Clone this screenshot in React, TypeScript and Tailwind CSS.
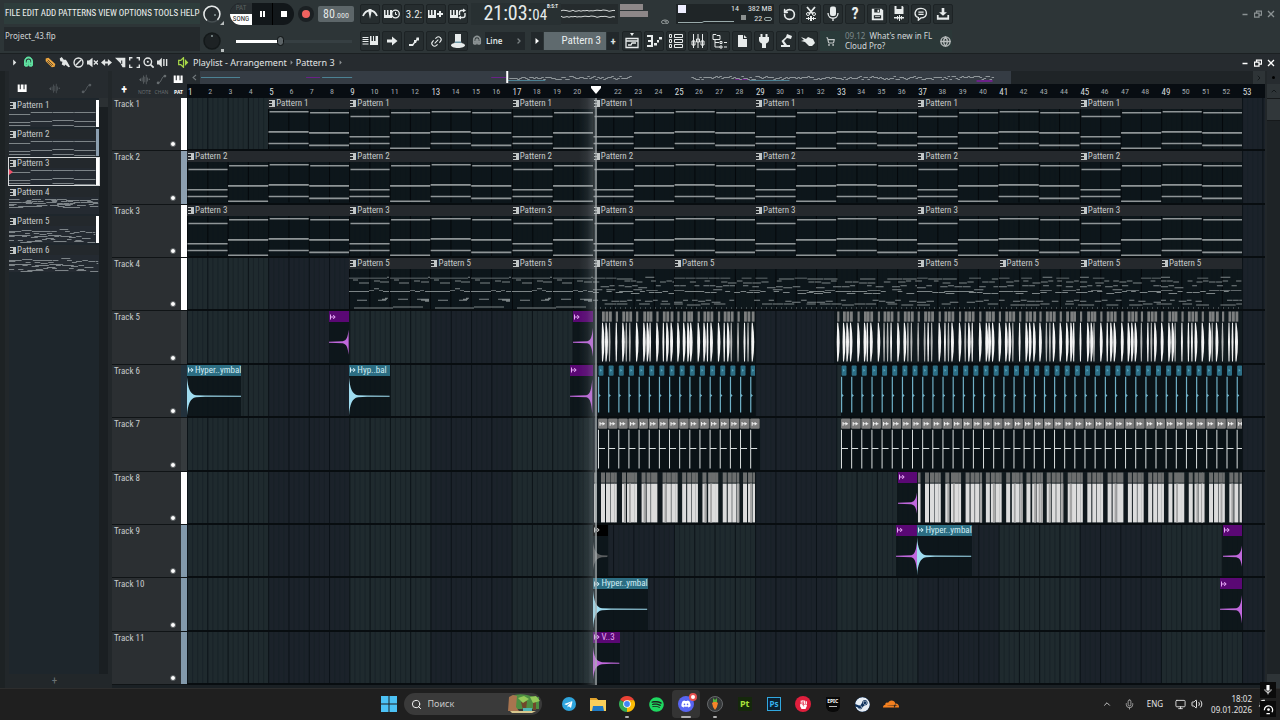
import type { ReactNode } from "react";
import {
  ChevronRight, ChevronUp, Globe, Link2, Magnet, Mic, Monitor, RotateCw, Search, ShoppingCart, Volume2,
} from "lucide-react";
import { FaDiscord, FaSpotify, FaSteam, FaTelegramPlane, FaFistRaised } from "react-icons/fa";
import { SiCloudflare } from "react-icons/si";

// One bar is drawn BAR units wide, VISIBLE bars fit in the timeline.
const BAR = 20.28;
const VISIBLE = 53.13;
const BODY = 42;

const pct = (bars: number) => `${(bars / VISIBLE) * 100}%`;
const rnd = (i: number) => {
  const v = Math.sin(i * 12.9898) * 43758.5453;
  return v - Math.floor(v);
};
const box = (x: number, y: number, w: number, h: number) => `M${x.toFixed(2)} ${y}h${w.toFixed(2)}v${h}h${(-w).toFixed(2)}z`;

const CHORDS = [
  [7, 28, 35],
  [3, 24, 40],
  [2, 23, 35],
  [3, 24, 37],
];

function chordPath(len: number, offset: number) {
  let d = "";
  for (let i = 0; i < len / 2; i++) {
    CHORDS[(i + offset) % 4].forEach((y, n) => {
      const inset = n === 0 ? 1.5 : 0.5;
      d += box(i * BAR * 2 + inset, y, BAR * 2 - inset, 1.7);
    });
  }
  return d;
}

const MELODY = [
  [0, 9, 38], [38, 8, 2], [41, 9, 38], [79, 8, 2],
  [4, 11, 5], [10, 14, 10], [25, 12, 6], [31, 13, 9], [45, 11, 5], [50, 14, 10], [65, 12, 6], [72, 13, 8],
  [0, 23, 20], [20, 22, 5], [25, 20, 5], [30, 22, 4], [34, 23, 6], [41, 23, 20], [61, 22, 5], [66, 23, 5], [71, 22, 4], [76, 23, 5],
  [8, 32, 10], [29, 32, 8], [33, 31, 5], [36, 30, 3], [49, 31, 10], [68, 31, 12], [72, 32, 8], [76, 33, 4],
  [5, 40, 39], [44, 39, 30],
];

function melodyPath(len: number) {
  let d = "";
  for (let b = 0; b < len; b += 4) for (const [x, y, w] of MELODY) d += box(b * BAR + x, y, w, 1);
  return d;
}

function densePath(len: number, seed: number, height = 38) {
  let d = "";
  const end = len * BAR;
  const rows = [0.22, 0.32, 0.44, 0.56, 0.61, 0.84, 0.94];
  for (let r = 0; r < rows.length; r++) {
    let x = 0;
    for (let i = 0; x < end - 1; i++) {
      const k = rnd(((i * 7 + r * 31 + seed) % 90) + 1);
      const w = Math.min(end - x, r % 3 === 0 ? 6 + k * 10 : 3 + k * 6);
      if (k > 0.25) d += box(x, Math.round(rows[r] * height + k * 3 - 1), w, 1);
      x += w + (k < 0.4 ? 4 : 0.5);
    }
  }
  if (height > 20) for (let x = 2; x < end; x += 5) d += box(x, height + 2, 1, 1);
  return d;
}

type ClipProps = { start: number; len: number; name?: string; head: string; color: string; d: string; pattern?: boolean };

function ArrowMark() {
  return (
    <svg viewBox="0 0 6 6" className="h-[6px] w-[6px] shrink-0" fill="none" stroke="currentColor">
      <path d="M.5 .5v5M1 3h4M3.2 1l2 2-2 2" />
    </svg>
  );
}

function PatternMark() {
  return (
    <svg viewBox="0 0 6 7" className="h-[7px] w-[6px] shrink-0" aria-hidden="true">
      <path d="M0 0h6v7H0V6h3V4H0V3h3V1H0z" fill="#c3c7c7" />
    </svg>
  );
}

function Clip({ start, len, name, head, color, d, pattern }: ClipProps) {
  return (
    <div className="absolute inset-y-0 flex flex-col overflow-hidden bg-[#0c1519]/90" style={{ left: pct(start - 1), width: pct(len) }}>
      <div className={`flex h-[11px] shrink-0 items-center gap-px pl-px text-[9px] leading-[11px] whitespace-nowrap ${head}`}>
        {pattern ? <PatternMark /> : <ArrowMark />}
        <span>{name}</span>
      </div>
      <svg className="min-h-0 w-full flex-1" viewBox={`0 0 ${len * BAR} ${BODY}`} preserveAspectRatio="none">
        {pattern &&
          Array.from({ length: Math.ceil(len) }, (_, i) => (
            <path key={i} d={box(i * BAR, 0, 1, BODY)} fill="#05090c" />
          ))}
        <path d={d} fill={color} />
      </svg>
    </div>
  );
}

const PATTERN_HEAD = "bg-[#25292d] text-[#c5c9c9]";
const CYMBAL_HEAD = "bg-[#2c6d82] text-[#d3edf5]";
const FX_HEAD = "bg-[#5a0874] text-[#e6a8f5]";

const cymbalWave = (len: number, a = 20) => {
  const w = len * BAR;
  return `M0 ${21 - a}C1 ${21 - a * 0.4} 3 19 9 20L18 20.400 ${w} 20.500V21.500L18 21.600 9 22C3 23 1 ${21 + a * 0.4} 0 ${21 + a}Z`;
};
const fxWave = (len: number, a = 18) => {
  const w = len * BAR;
  return `M${w} ${21 - a}C${w - 1} ${21 - a * 0.4} ${w - 2} 19 ${w - 6} 20L0 20.500V21.500L${w - 6} 22C${w - 2} 23 ${w - 1} ${21 + a * 0.4} ${w} ${21 + a}Z`;
};

const Cymbal = ({ start, len, name }: { start: number; len: number; name: string }) => (
  <Clip start={start} len={len} name={name} head={CYMBAL_HEAD} color="#9fdcf0" d={cymbalWave(len)} />
);
const Fx = ({ start, len, a }: { start: number; len: number; a?: number }) => (
  <Clip start={start} len={len} head={FX_HEAD} color="#c068dc" d={fxWave(len, a)} />
);

function Chords({ name, starts }: { name: string; starts: number[][] }) {
  return (
    <>
      {starts.map(([s, len, off]) => (
        <Clip key={s} start={s} len={len} name={name} pattern head={PATTERN_HEAD} color="#8f9597" d={chordPath(len, off)} />
      ))}
    </>
  );
}

// Run is a stretch of short one-shot clips drawn as one picture.
function Run({ start, end, kind }: { start: number; end: number; kind: "hat" | "tick" | "snare" | "kick" }) {
  const bars = end - start;
  const w = bars * BAR;
  const marks: ReactNode[] = [];
  if (kind === "tick" || kind === "snare") {
    for (let i = 0; i < bars * 2; i++) {
      const x = (i * BAR) / 2;
      if (kind === "tick") {
        marks.push(
          <g key={i}>
            <rect x={x + 0.5} y="0.5" width="5" height="10.500" rx="1" fill="#2d6f86" />
            <path d={`M${x + 2} 4l2 1.500-2 1.500z`} fill="#5aa6bd" />
            <path d={`M${x} 12h1.200v18l1.500 1.500L${x + 1.2} 33v16h-1.200z`} fill="#6fb0c6" />
          </g>,
        );
      } else {
        marks.push(
          <g key={i}>
            <rect x={x} y="0.500" width="9.500" height="10.500" rx="1" fill="#7c7c7c" />
            <path d={`M${x + 2} 4v4M${x + 2} 6h5M${x + 4.5} 4.500l1.500 1.500-1.500 1.500`} stroke="#eee" fill="none" />
            <path d={`M${x} 12h1v19h6v1h-6v20h-1z`} fill="#dadfdf" />
          </g>,
        );
      }
    }
  } else {
    const hits = kind === "hat" ? [2.5, 9, 12.5, 16] : [0, 7, 12, 16.5];
    for (let b = 0; b < bars; b++) {
      hits.forEach((h, n) => {
        const r = rnd(b * 4 + n + start);
        const x = b * BAR + h + (r > 0.7 ? 0.7 : 0);
        if (x > w - 2) return;
        if (kind === "hat") {
          if (start === 21 && b === 0 && n === 0) return;
          const t = r > 0.4 ? 3 : 1;
          marks.push(
            <g key={`${b}-${n}`}>
              <rect x={x} y="0.500" width={n ? 2.8 : 2.2} height="10.500" fill="#7d7f7f" />
              <path d={`M${x} 12q-1 20 0 40h1q${t} -20 0 -40z`} fill={r > 0.2 ? "#f4f4f4" : "#b5b7b7"} />
            </g>,
          );
        } else {
          const t = n === 0 ? 2.5 : 4;
          marks.push(
            <g key={`${b}-${n}`}>
              <rect x={x} y="0.500" width={t} height="10.500" fill="#6c6e6e" />
              <rect x={x} y="12" width={t} height="40" fill="#dcdcdc" />
              {r > 0.6 && <rect x={x + t - 2} y="12" width="2" height="40" fill="#a5a5a5" />}
            </g>,
          );
        }
      });
    }
  }
  const solid = kind === "snare" || kind === "tick";
  return (
    <svg
      className={`absolute inset-y-0 h-full ${solid ? "bg-[#0a1216]" : "bg-[#0a1216]/60"}`}
      style={{ left: pct(start - 1), width: pct(bars) }}
      viewBox={`0 0 ${w} 53`}
      preserveAspectRatio="none"
    >
      {marks}
    </svg>
  );
}

const FULL = [[1, 8, 0], [9, 8, 0], [17, 4, 0], [21, 8, 0], [29, 8, 0], [37, 8, 0]];

const TRACKS: { strip: string; clips: ReactNode }[] = [
  { strip: "bg-white", clips: <Chords name="Pattern 1" starts={[[5, 4, 2], ...FULL.slice(1), [45, 8, 0]]} /> },
  { strip: "bg-[#8c9fb0]", clips: <Chords name="Pattern 2" starts={[...FULL, [45, 8, 0]]} /> },
  { strip: "bg-white", clips: <Chords name="Pattern 3" starts={[...FULL, [45, 8, 0]]} /> },
  {
    strip: "bg-white",
    clips: [[9, 4], [13, 4], [17, 4], [21, 4], [25, 12], [37, 4], [41, 4], [45, 4], [49, 4]].map(([s, len]) => (
      <Clip
        key={s}
        start={s}
        len={len}
        name="Pattern 5"
        pattern
        head={PATTERN_HEAD}
        color="#7c8486"
        d={s < 21 ? melodyPath(len) : densePath(len, s)}
      />
    )),
  },
  {
    strip: "bg-[#363b3e]",
    clips: (
      <>
        <Fx start={8.02} len={0.97} a={13} />
        <Fx start={20.02} len={1} />
        <Run start={21} end={29} kind="hat" />
        <Run start={32.9} end={53} kind="hat" />
      </>
    ),
  },
  {
    strip: "bg-[#22313c]",
    clips: (
      <>
        <Cymbal start={1} len={2.67} name="Hyper..ymbal" />
        <Cymbal start={9} len={2} name="Hyp..bal" />
        <Fx start={19.9} len={1.1} />
        <Run start={21.24} end={29} kind="tick" />
        <Run start={33.24} end={53} kind="tick" />
      </>
    ),
  },
  {
    strip: "bg-[#363b3e]",
    clips: (
      <>
        <Run start={21.24} end={29.24} kind="snare" />
        <Run start={33.24} end={53} kind="snare" />
      </>
    ),
  },
  {
    strip: "bg-white",
    clips: (
      <>
        <Run start={21.05} end={29} kind="kick" />
        <Fx start={36.05} len={0.95} a={13} />
        <Run start={37.05} end={53} kind="kick" />
      </>
    ),
  },
  {
    strip: "bg-[#8299ab]",
    clips: (
      <>
        <Clip start={21.03} len={0.7} head="bg-black text-[#ccc]" color="#5a5d5f" d={cymbalWave(0.7, 15)} />
        <Fx start={35.95} len={1.05} />
        <Cymbal start={37} len={2.67} name="Hyper..ymbal" />
        <Fx start={52.05} len={0.95} a={13} />
      </>
    ),
  },
  {
    strip: "bg-[#8299ab]",
    clips: (
      <>
        <Cymbal start={21.03} len={2.67} name="Hyper..ymbal" />
        <Fx start={51.9} len={1.1} />
      </>
    ),
  },
  {
    strip: "bg-[#8299ab]",
    clips: <Clip start={21.03} len={1.3} name="V..3" head={FX_HEAD} color="#c068dc" d={cymbalWave(1.3, 17)} />,
  },
];

function GridLines() {
  const w = VISIBLE * BAR;
  let bars = "";
  let beats = "";
  let shade = "";
  for (let b = 0; b <= VISIBLE; b++) {
    bars += box(b * BAR, 0, 1, 10);
    for (let q = 1; q < 4; q++) beats += box((b + q / 4) * BAR, 0, 1, 10);
    if (b % 8 === 4) shade += box(b * BAR, 0, BAR * 4, 10);
  }
  return (
    <svg className="absolute inset-0 h-full w-full" viewBox={`0 0 ${w} 10`} preserveAspectRatio="none">
      <path d={shade} fill="#1b222a" />
      <path d={beats} fill="#172026" opacity=".75" />
      <path d={bars} fill="#0c1318" />
    </svg>
  );
}

// G is a filled 16x16 glyph.
function G({ d, children, className = "h-4 w-4" }: { d?: string; children?: ReactNode; className?: string }) {
  return (
    <svg viewBox="0 0 16 16" className={className} fill="currentColor">
      {d && <path d={d} />}
      {children}
    </svg>
  );
}

const S = ({ d, w = 1.4 }: { d: string; w?: number }) => <path d={d} fill="none" stroke="currentColor" strokeWidth={w} />;

const KEYS = "M1 2h3v7h1.500V2h4v7H11V2h3v11H1z";
const WAVE = "M0 7.500h2V6h1v4H2zM4 5h1v6H4zM6 2h1v12H6zM8 4h1v8H8zM10 1h1v14h-1zM12 5h1v6h-1zM14 7h2v1.500h-2z";
const SMALL_KEYS = "M0 4h1.500v5H3V4h1.500v5H6V4h2v8H0z";

function Tool({ label, children }: { label: string; children: ReactNode }) {
  return (
    <button
      aria-label={label}
      className="flex h-5 w-5 shrink-0 items-center justify-center rounded-xs border border-[#1d2325] bg-[#262d2f] text-[#e8ecec]"
    >
      {children}
    </button>
  );
}

const ROW1_LEFT: [string, ReactNode][] = [
  ["Metronome", <G><S d="M1 10C3 5 6 4.500 8 4.500s5 .5 7 5.500" w={1.8} /><path d="M6.500 3h3v3l-1.500 7-1.500-7z" /></G>],
  ["Wait for input", <G d={SMALL_KEYS}><circle cx="11.500" cy="8" r="3.800" fill="none" stroke="currentColor" strokeWidth="1.300" /><S d="M11.500 6v2.500H13" w={1} /></G>],
  ["Countdown", <span className="text-[11px] leading-none">3.2:</span>],
  ["Step edit", <G d={SMALL_KEYS}><path d="M11 5h2v2h2v2h-2v2h-2V9H9V7h2z" /></G>],
  ["Loop record", <G d={SMALL_KEYS}><S d="M9.500 9V6.500a2 2 0 0 1 2-2H14M15 7v2.500a2 2 0 0 1-2 2h-2.500" /><path d="M13 2.500l3 2-3 2zM11 13.500l-3-2 3-2z" /></G>],
];

const ROW2_LEFT: [string, ReactNode][] = [
  ["Typing keyboard", <G><S d="M.5 4.500h6M.5 6.500h6M.5 8.500h6M.5 11h6" w={1} /><path d="M8 3h1.500v5H11V3h1v5h1.500V3H16v9H8z" /></G>],
  ["Follow playback", <G d="M3 6.500h5V3.500L13.500 8 8 12.500V9.500H3z" />],
  ["Slide", <G d="M3 11h3.500L8 9V7h2l.5-2.500h2.500v3H11L10 10H9l-2 3H3z" />],
  ["Link", <Link2 className="h-[13px] w-[13px] -rotate-45" />],
  ["Performance mode", <G d="M5 1h6v5c0 2 0 3 .5 4C14 10.500 15 11.500 15 12.500S12 15 8 15s-7-1.500-7-2.500S2 10.500 4.500 10C5 9 5 8 5 6z"><path d="M5 8.500h6v1.500H5z" fill="#6b98a8" /></G>],
];

const ROW1_RIGHT: [string, ReactNode][] = [
  ["Undo", <RotateCw className="h-[13px] w-[13px] -scale-x-100" strokeWidth={3} />],
  ["Cut", <G><S d="M4 1l6 7M12 1L6 8" w={1.8} /><circle cx="5" cy="8" r="1.500" fill="none" stroke="currentColor" /><circle cx="11" cy="8" r="1.500" fill="none" stroke="currentColor" /><path d="M3 12h2v-1h1v1h1v-2h2v2h1v-1h1v1h2v1h-2v1h-1v-1H9v2H7v-2H6v1H5v-1H3z" /></G>],
  ["Record audio", <G d="M5 2.500a2 2 0 0 1 2-2h2a2 2 0 0 1 2 2V8a2 2 0 0 1-2 2H7a2 2 0 0 1-2-2z"><S d="M3 7c0 7 10 7 10 0M8 12v3" w={1.3} /></G>],
  ["Help", <span className="text-[16px] leading-none font-bold">?</span>],
  ["Save", <G className="h-[13px] w-[13px]" d="M1 1h12l2 2v12H1z"><path d="M4 1h7v4.500H4zM3.500 9h9v4h-9z" fill="#262d2f" /><path d="M8 2h2v3H8zM5 10h6v1H5z" /></G>],
  ["Save new version", <G d="M3.500 0h8l1 1v7h-9z"><path d="M5.500 0h5v3h-5z" fill="#262d2f" /><path d="M3 11h3v-1h1v1h1v-2h1v2h1v-1h1v1h2v1.500h-2v1h-1v-1H9V15H8v-2.500H7v1H6v-1H3z" /></G>],
  ["Comments", <G className="h-[14px] w-[14px]"><S d="M8 1.500c8 0 8.500 11 0 11L5 15v-3C-1 10 .5 1.500 8 1.500zM5 5.800h6M5 8.500h6" w={1.5} /></G>],
  ["Export", <G className="h-[14px] w-[14px]" d="M6.500 1h3v5h3L8 10 3.500 6h3zM1 9h2v3h10V9h2v5.500H1z" />],
];

const ROW2_RIGHT: [string, ReactNode][] = [
  ["Playlist", <G><S d="M2 5.500h12v9H2zM2 8h12M4 12h3l1-2h4" w={1.3} /><path d="M6 0h4L8 3z" /></G>],
  ["Piano roll", <G d="M1 2h6v12H1v-2h4V9H2V7h3V4H1zM8 10h3v2.500H8zM11 7h2v2.500h-2zM13 4h3v2.500h-3z" />],
  ["Channel rack", <G><S d="M1.500 1.500h2v3h-2zM6.500 1.500h8v3h-8zM1.500 6.500h2v3h-2zM6.500 6.500h8v3h-8zM1.500 11.500h2v3h-2zM6.500 11.500h8v3h-8z" w={1} /></G>],
  ["Mixer", <G><S d="M3.500 1v14M8 1v14M12.500 1v14M2 8h3v4H2zM6.500 6h3v3h-3zM11 8h3v4h-3z" w={1} /></G>],
  ["Browser", <G><S d="M1 1.500h3l1 1h3v4H1zM3 7v7h5M3 9.500h4M8 8.500h2v2H8zM8 13h2v2H8zM12 9.500h3M12 14h3" w={1} /></G>],
  ["New project", <G d="M4 2h6l3 3v9H4z"><path d="M9 1.500h1V5h4v1H9z" fill="#262d2f" /></G>],
  ["Plugin picker", <G d="M4.500 1h2v3h3V1h2v3h1.500v3c0 2-1.500 3-3 3.500V15H6v-4.500C4.500 10 3 9 3 7V4h1.500z" />],
  ["Tempo tapper", <G d="M9 1l5 2-1 3-4-1L6 8l3 4h3v2H3v-2h3L3.500 8 8 4z" />],
  ["Touch", <G d="M1 4l5 2 2-2 5 2 2 4-3 3-3 0-4-4-4-1 3-1z" />],
];

function Monitors() {
  const wave = (y: number) => Array.from({ length: 28 }, (_, i) => `${i ? "L" : "M"}${i * 2} ${(y + rnd(i + y) * 1.3).toFixed(1)}`).join("");
  return (
    <svg viewBox="0 0 114 20" className="h-5 w-[114px] shrink-0" aria-hidden="true">
      <rect width="57" height="20" fill="#252b2d" />
      <path d={wave(6) + wave(12)} stroke="#d5d9d9" fill="none" />
      <path d="M59 0h23v6H59zM59 7h28v6H59z" fill="#8d8788" />
      <ellipse cx="104" cy="18" rx="3.500" ry="2" fill="none" stroke="#9ca3a3" />
      <path d="M104 17v1h2" stroke="#9ca3a3" fill="none" />
    </svg>
  );
}

const icon = "h-[11px] w-[11px]";
const TITLE_TOOLS: [string, ReactNode][] = [
  ["Draw", <G className={`${icon} text-[#f0a840]`}><path d="M1 2l4-1 10 9-1 4-4 1L1 6z" /><path d="M4 4l8 8M3 6l7 7" stroke="#262b2f" /></G>],
  ["Paint", <G className={icon} d="M1 2l3-2 3 4 3 0 2 3 4 7-2 1-5-4-1 2-4-2 1-4-3-1z" />],
  ["Delete", <G className={icon}><circle cx="8" cy="8" r="6.500" fill="none" stroke="currentColor" strokeWidth="2" /><S d="M12 4l-8 8" w={2} /></G>],
  ["Mute", <G className={icon} d="M0 5h3l5-4v14l-5-4H0z"><S d="M10 5l6 6M16 5l-6 6" w={2} /></G>],
  ["Slip", <G className={icon} d="M0 8l6-5v3.500h4V3l6 5-6 5V9.500H6V13z" />],
  ["Slice", <G className={icon} d="M0 1h15v14h-4l-3-6z"><path d="M9 5h1.500v5H9z" fill="#262b2f" /></G>],
  ["Select", <G className={icon}><S d="M1 5V1h4M11 1h4v4M15 11v4h-4M5 15H1v-4" w={2} /></G>],
  ["Zoom", <G className={icon}><circle cx="7" cy="7" r="5.500" fill="none" stroke="currentColor" strokeWidth="2" /><circle cx="7" cy="7" r="1.500" /><S d="M11 11l4.500 4.500" w={2.5} /></G>],
  ["Playback", <G className={icon} d="M0 5h3l4-4v14l-4-4H0zM9 3h2v10H9zM13 3h2v10h-2z" />],
];

function WindowButtons({ tone }: { tone: string }) {
  return (
    <div className={`flex items-center gap-[3px] ${tone}`}>
      <button aria-label="Minimize" className="flex h-3 w-[10px] items-center justify-center"><G className="h-2 w-2"><S d="M3 9h10" w={3} /></G></button>
      <button aria-label="Restore" className="flex h-3 w-[10px] items-center justify-center"><G className="h-2 w-2"><S d="M1 6h9v8H1zM5 5V2h10v8h-4" w={2.5} /></G></button>
      <button aria-label="Close" className="flex h-3 w-[10px] items-center justify-center"><G className="h-2 w-2"><S d="M2 2l12 12M14 2L2 14" w={2.5} /></G></button>
    </div>
  );
}

function Knob({ dark }: { dark?: boolean }) {
  return (
    <svg viewBox="0 0 24 22" className="h-[22px] w-6 shrink-0" aria-hidden="true">
      <circle cx="12" cy="11" r="8" fill={dark ? "#1d2224" : "#262d30"} stroke={dark ? "#14191a" : "#454d50"} strokeWidth="1.500" />
      {!dark && <path d="M7 17.500a8 8 0 1 1 10.500-.6" fill="none" stroke="#e5e8e8" strokeWidth="1.500" />}
      <circle cx={dark ? 12 : 15} cy={dark ? 6 : 12} r="1" fill="#899" />
      <path d={dark ? "M21 19h3v3h-3z" : "M24 18v4h-4z"} fill="#b9bebe" />
    </svg>
  );
}

function Transport() {
  return (
    <div className="flex w-[160px] shrink-0 flex-col gap-[5px]">
      <div className="flex h-[22px] items-center">
        <Knob />
        <div className="ml-[6px] flex h-[22px] overflow-hidden rounded-full bg-[#12171a]">
          <button className="flex w-[22px] flex-col bg-[#2a3033] text-center text-[7px] leading-[11px]">
            <span className="w-full text-[#59605f]">PAT</span>
            <span className="w-full rounded-bl-lg bg-white text-[#222]">SONG</span>
          </button>
          <button aria-label="Pause" className="flex w-[21px] items-center justify-center gap-[1px] border-r border-black">
            <span className="h-[6px] w-[2px] bg-white" />
            <span className="h-[6px] w-[2px] bg-white" />
          </button>
          <button aria-label="Stop" className="flex w-[21px] items-center justify-center">
            <span className="h-[6px] w-[6px] bg-white" />
          </button>
        </div>
        <button aria-label="Record" className="ml-[4px] flex h-4 w-4 items-center justify-center rounded-full bg-[#1b2023]">
          <span className="h-2 w-2 rounded-full bg-[#f0625f]" />
        </button>
        <div className="ml-[4px] flex h-4 w-9 items-baseline justify-center rounded-xs bg-[#5d6669] text-[12px] leading-4 text-[#e2e6e6]">
          80<span className="text-[8px]">.000</span>
        </div>
      </div>
      <div className="flex h-[22px] items-center">
        <Knob dark />
        <input
          type="range"
          aria-label="Song position"
          defaultValue={38}
          className="ml-3 h-[3px] w-[116px] appearance-none bg-[linear-gradient(to_right,#fff_38%,#363f42_38%)] [&::-webkit-slider-thumb]:h-[10px] [&::-webkit-slider-thumb]:w-[7px] [&::-webkit-slider-thumb]:appearance-none [&::-webkit-slider-thumb]:rounded-full [&::-webkit-slider-thumb]:border [&::-webkit-slider-thumb]:border-[#0d1112] [&::-webkit-slider-thumb]:bg-[#5c6467]"
        />
      </div>
    </div>
  );
}

function Header() {
  return (
    <header className="flex h-[54px] shrink-0 border-b border-[#1b2022] bg-[#2d3537] pt-[3px]">
      <div className="flex w-[200px] shrink-0 flex-col gap-[3px] pl-1">
        <nav className="flex h-[21px] items-center gap-[2px] bg-[#2e3d3c] pl-px text-[9px] whitespace-nowrap text-[#eef1f0]">
          {["FILE", "EDIT", "ADD", "PATTERNS", "VIEW", "OPTIONS", "TOOLS", "HELP"].map((m) => (
            <button key={m}>{m}</button>
          ))}
        </nav>
        <div className="h-6 bg-[#24292c] pt-[3px] pl-px font-['Noto_Sans'] text-[8px] leading-3 text-[#d2d6d6]">Project_43.flp</div>
      </div>
      <Transport />
      <div className="flex min-w-0 flex-1 flex-col gap-[5px]">
        <div className="flex h-[22px] items-center">
          <div className="flex gap-[2px]">
            {ROW1_LEFT.map(([label, g]) => <Tool key={label} label={label}>{g}</Tool>)}
          </div>
          <div className="ml-[3px] flex h-[22px] w-[90px] shrink-0 items-center justify-end bg-[#283032] pr-[3px] text-[#e6ebeb]">
            <div className="text-[20px] leading-[24px]">21:03:<span className="text-[15px]">04</span></div>
            <span className="self-start text-[5px] leading-[6px] font-bold">B:S:T</span>
          </div>
          <Monitors />
          <div className="ml-px flex h-5 w-[98px] shrink-0 justify-between bg-[#1f2527] px-[2px] text-[8px] leading-[10px] text-[#e2e6e6]">
            <svg viewBox="0 0 56 20" className="h-5 w-14 shrink-0" aria-hidden="true">
              <path d="M0 1h8v8H0z" fill="#eef" />
              <path d="M0 18.500h24l2-1h30" stroke="#9aa" fill="none" />
            </svg>
            <div className="-ml-[10px] w-[10px]">14<span className="mt-px ml-[10px] block h-[5px] w-[5px] bg-[#8b9090]" /></div>
            <div className="text-right whitespace-nowrap">382 MB<br />22 <span className="inline-block h-1 w-2 rounded-full border border-[#9aa]" /></div>
          </div>
          <div className="ml-[5px] flex gap-[2px]">
            {ROW1_RIGHT.map(([label, g]) => <Tool key={label} label={label}>{g}</Tool>)}
          </div>
          <div className="mr-1 ml-auto"><WindowButtons tone="text-[#8b9293]" /></div>
        </div>
        <div className="flex h-[22px] items-center">
          <div className="flex gap-[2px]">
            {ROW2_LEFT.map(([label, g]) => <Tool key={label} label={label}>{g}</Tool>)}
          </div>
          <Magnet className="ml-[4px] h-[10px] w-[10px] -rotate-45 text-[#8b9293]" strokeWidth={4} />
          <label className="ml-[3px] flex h-[18px] w-10 items-center bg-[#22282b] text-[#dfe3e3]">
            <select aria-label="Snap" className="w-7 appearance-none pl-px font-['Noto_Sans'] text-[8px] font-semibold">
              <option>Line</option>
            </select>
            <ChevronRight className="ml-[2px] h-2 w-2 text-[#7b8284]" strokeWidth={4} />
          </label>
          <button aria-label="Pattern menu" className="ml-[6px] flex h-[18px] w-3 items-center justify-center bg-[#22282b] text-white"><G className="h-2 w-2" d="M5 2l7 6-7 6z" /></button>
          <button className="ml-px h-[18px] w-[62px] bg-[#5f6a6e] pr-[5px] text-right text-[11px] text-[#eaeeee]">Pattern 3</button>
          <button aria-label="Add pattern" className="ml-px h-[18px] w-3 bg-[#22282b] text-[11px] leading-none font-bold text-[#dde2e2]">+</button>
          <div className="ml-[3px] flex gap-[2px]">
            {ROW2_RIGHT.map(([label, g]) => <Tool key={label} label={label}>{g}</Tool>)}
            <button aria-label="Shop" className="flex h-5 w-5 items-center justify-center bg-[#2a3b3a] text-[#c5caca]"><ShoppingCart className="h-[9px] w-[9px]" strokeWidth={3} /></button>
          </div>
          <a href="#news" className="flex h-[22px] w-[112px] items-center justify-between bg-[#2b3838] pl-[5px] font-['Noto_Sans'] text-[8px] leading-[10px] text-[#d3d8d8]">
            <span><span className="text-[#7c8889]">09.12</span>&nbsp; What's new in FL<br />Cloud Pro?</span>
            <Globe className="mr-px h-[11px] w-[11px] text-[#b7bcbc]" strokeWidth={3} />
          </a>
        </div>
      </div>
    </header>
  );
}

function TitleBar() {
  return (
    <div className="flex h-[17px] shrink-0 items-center bg-[#262b2f] pl-[11px] font-['Noto_Sans'] text-[9px] text-[#e2e5e5]">
      <button aria-label="Menu"><G className="h-[7px] w-[7px]" d="M5 1l7 7-7 7z" /></button>
      <button aria-label="Snap" className="ml-[5px]"><Magnet className="h-[11px] w-[11px] -rotate-45 text-[#5fe0a0]" strokeWidth={4} /></button>
      <div className="ml-[11px] flex gap-[3px]">
        {TITLE_TOOLS.map(([label, g]) => <button key={label} aria-label={label}>{g}</button>)}
      </div>
      <G className="ml-[10px] h-[11px] w-[11px] text-[#a8d848]"><S d="M1 5h3l4-4v14l-4-4H1z" w={1.8} /><path d="M10 3l5 5-5 5z" /></G>
      <span className="ml-[4px]">Playlist - Arrangement</span>
      <G className="mx-px h-[7px] w-[7px] text-[#8a9092]" d="M6 3l5 5-5 5z" />
      <span>Pattern 3</span>
      <G className="ml-[2px] h-[7px] w-[7px] text-[#8a9092]" d="M6 3l5 5-5 5z" />
      <div className="mr-1 ml-auto"><WindowButtons tone="text-white" /></div>
    </div>
  );
}

const PICKER: { name: string; strip?: string; d: string }[] = [
  { name: "Pattern 1", strip: "bg-white", d: "" },
  { name: "Pattern 2", strip: "bg-[#8c9fb0]", d: "" },
  { name: "Pattern 3", strip: "bg-white", d: "" },
  { name: "Pattern 4", d: densePath(4.4, 4, 9) },
  { name: "Pattern 5", strip: "bg-white", d: densePath(4.4, 21, 16) },
  { name: "Pattern 6", d: densePath(4.4, 21, 16) },
];

const MINI_CHORDS = CHORDS.map((ys, i) => ys.map((y) => box(i * 22.5, Math.round(y * 0.4) + 1, 22, 1)).join("")).join("");

function Picker() {
  return (
    <aside className="flex w-[107px] shrink-0 flex-col border-x-4 border-[#22272a] bg-[#1c242a]">
      <div className="flex h-[27px] items-end gap-[21px] bg-[#262b2f] pb-[4px] pl-[8px] text-[#565c60]">
        <button aria-label="Patterns" className="text-white"><G className="h-[11px] w-[11px]" d={KEYS} /></button>
        <button aria-label="Audio clips"><G className="h-[11px] w-[11px]" d={WAVE} /></button>
        <button aria-label="Automation"><G className="h-[11px] w-[11px]"><S d="M3 13c5 0 5-10 10-10" /><circle cx="3" cy="13" r="2" /><circle cx="13" cy="3" r="2" /></G></button>
      </div>
      <div className="flex flex-1">
        <ul className="flex w-[90px] flex-col gap-[2px] bg-[#1e262c] pt-[2px] pl-0">
          {PICKER.map((p, i) => (
            <li key={p.name} className={`relative flex h-[27px] bg-[#242a31] ${i === 2 ? "outline outline-[#d8dadb]" : ""}`}>
              <div className="min-w-0 flex-1">
                <div className="flex h-[10px] items-center gap-px bg-[#23282c] pl-px text-[9px] leading-[10px] text-[#c5c9ca]"><PatternMark />{p.name}</div>
                <svg viewBox="0 0 90 17" preserveAspectRatio="none" className="h-[17px] w-full"><path d={p.d || MINI_CHORDS} fill="#7d8488" /></svg>
              </div>
              {p.strip && <span className={`w-[3px] ${p.strip}`} />}
              {i === 2 && <svg viewBox="0 0 4 6" className="absolute top-[11px] left-0 h-[6px] w-1"><path d="M0 0l4 3-4 3z" fill="#f0506a" /></svg>}
            </li>
          ))}
        </ul>
        <div className="flex-1 bg-[#1a1f22]"><div className="h-[9px] bg-[#2b3033]" /></div>
      </div>
      <button aria-label="Add" className="h-[14px] bg-[#22272a] pr-2 text-[11px] leading-[14px] text-[#6b7174]">+</button>
    </aside>
  );
}

function Overview() {
  const fuzz = (from: number, to: number) => {
    let d = "";
    for (let x = from; x < to; x += 2) d += box(x, Math.round(5 + rnd(x) * 3), 2.5, 1);
    return d;
  };
  return (
    <div className="flex h-[13px] bg-[#1f2427]">
      <div className="w-[76.4%] bg-[#353c44]">
        <svg viewBox="0 0 823 13" preserveAspectRatio="none" className="h-full w-full" aria-hidden="true">
          <path d="M0 0h13v13H0z" fill="#262c30" />
          <path d="M9 4L6 6.500 9 9" stroke="#737a7d" fill="none" />
          <path d="M14 6h39v1H14zM135 6h30v1h-30zM320 9h38v1h-38zM562 9h40v1h-40z" fill="#4c8294" />
          <path d="M119 6h14v1h-14zM304 6h15v1h-15zM548 8h14v1h-14zM789 9h16v2h-16z" fill="#6b2288" />
          <path d={fuzz(322, 443) + fuzz(504, 805)} fill="#8f969a" />
          <path d="M319 0h2v12h-2z" fill="#fff" />
        </svg>
      </div>
      <button aria-label="Scroll right" className="ml-auto flex w-3 items-center justify-center bg-[#2e3437] text-[#14191b]"><ChevronRight className="h-2 w-2" strokeWidth={3} /></button>
    </div>
  );
}

function Ruler() {
  return (
    <div className="relative flex h-[14px] overflow-hidden bg-[#080d12] leading-[16px] text-[#a2a9ad]">
      {Array.from({ length: 53 }, (_, i) => (
        <span
          key={i}
          className={`shrink-0 pl-px ${i % 4 === 0 ? "text-[9px] text-[#d5dadc]" : "text-[8px]"}`}
          style={{ width: pct(1) }}
        >
          {i === 20 ? "" : i + 1}
        </span>
      ))}
      <svg viewBox="0 0 10 8" className="absolute top-[2px] -ml-[3px] h-2 w-[10px]" style={{ left: pct(20.05) }} aria-hidden="true">
        <path d="M0 0h10v2L5 8 0 2z" fill="#fff" />
      </svg>
    </div>
  );
}

function Arrangement() {
  return (
    <main className="flex min-w-0 flex-1 flex-col">
      <div className="flex h-[27px] shrink-0 bg-[#262b2f]">
        <div className="flex w-[75px] shrink-0 items-end pb-[2px]">
          <button aria-label="Add track" className="mb-px w-6 text-[12px] leading-[10px] font-bold text-white">+</button>
          <div className="grid flex-1 grid-cols-3 justify-items-center gap-y-[3px] font-['Noto_Sans'] text-[5px] leading-[8px] text-[#676d70]">
            <G className="h-[11px] w-[11px]" d={WAVE} />
            <G className="h-[11px] w-[11px]"><S d="M3 13c5 0 5-10 10-10" /><circle cx="3" cy="13" r="2" /><circle cx="13" cy="3" r="2" /></G>
            <G className="h-[11px] w-[11px] text-white" d={KEYS} />
            <span>NOTE</span>
            <span>CHAN</span>
            <span className="font-bold text-white">PAT</span>
          </div>
        </div>
        <div className="min-w-0 flex-1">
          <Overview />
          <Ruler />
        </div>
      </div>
      <div className="flex min-h-0 flex-1 bg-[#1a2024] pb-[3px]">
        <div className="grid w-[75px] shrink-0 auto-rows-fr">
          {TRACKS.map((t, i) => (
            <div key={i} className="flex min-h-0 border-b border-[#101416] bg-[#2b2f32]">
              <div className="relative flex-1 pt-px pl-[2px] text-[9px] leading-[10px] text-[#c8cccd]">
                Track {i + 1}
                <button aria-label={`Mute track ${i + 1}`} className="absolute right-[5px] bottom-[3px] h-[6px] w-[6px] rounded-full border border-[#565b5e] bg-white" />
              </div>
              <span className={`w-[6px] ${t.strip}`} />
            </div>
          ))}
        </div>
        <div className="relative grid min-w-0 flex-1 auto-rows-fr overflow-hidden bg-[#1f2a2e]">
          <GridLines />
          {TRACKS.map((t, i) => (
            <div key={i} className="relative min-h-0 border-b-2 border-[#080d10]">{t.clips}</div>
          ))}
          <div
            className="absolute inset-y-0 -ml-[14px] w-[18px] border-r-2 border-[#a9b0b2]/70 bg-linear-to-r from-transparent via-[#8b989c]/10 to-[#a9b3b6]/30"
            style={{ left: pct(20) }}
          />
        </div>
      </div>
    </main>
  );
}

function TaskButton({ label, run, children }: { label: string; run?: string; children: ReactNode }) {
  return (
    <button aria-label={label} className={`relative flex h-7 w-7 items-center justify-center rounded-sm ${run === "active" ? "bg-[#343434]" : ""}`}>
      {children}
      {run && <span className={`absolute bottom-0 h-[2px] rounded-full bg-[#b0b0b0] ${run === "active" ? "w-[10px]" : "w-1"}`} />}
    </button>
  );
}

function Taskbar() {
  return (
    <footer className="relative flex h-8 shrink-0 items-center border-t border-[#2d2d2d] bg-[#1f1f1f] font-['Noto_Sans'] text-white">
      <div className="flex flex-1 items-center justify-center pb-px pl-[6px]">
        <button aria-label="Start" className="mr-[7px]">
          <svg viewBox="0 0 16 16" className="h-4 w-4">
            <path d="M0 0h7.500v7.500H0zM8.500 0H16v7.500H8.500zM0 8.500h7.500V16H0zM8.500 8.500H16V16H8.500z" fill="#4cc2f5" />
          </svg>
        </button>
        <label className="flex h-[22px] w-[138px] items-center overflow-hidden rounded-full bg-[#3a3a3a] pl-[7px]">
          <Search className="h-[11px] w-[11px] shrink-0" />
          <input aria-label="Поиск" placeholder="Поиск" className="ml-[6px] w-20 min-w-0 text-[9px] placeholder:text-[#c8c8c8]" />
          <svg viewBox="0 0 34 20" className="ml-auto h-5 w-[34px] shrink-0">
            <path d="M3 2q8-3 16-1t12 2v12H1z" fill="#4d8f42" />
            <path d="M1 3l4-2 4 1-1 11 3 4H0z" fill="#a8744f" />
            <path d="M13 8l2 8h3l1-9zM25 6v10h3V6z" fill="#70482b" />
            <path d="M10 4l6-2 5 3-6 4zM22 3l6-1 4 5-7 2z" fill="#94c95a" />
            <path d="M2 17h26l-4 2H4z" fill="#d7c78e" />
            <path d="M15 14h9v3h-9z" fill="#4fb4b4" />
          </svg>
        </label>
        <div className="ml-[13px] flex w-[351px] justify-between">
          <TaskButton label="Telegram"><span className="flex h-[14px] w-[14px] items-center justify-center rounded-full bg-[#2fa4dc]"><FaTelegramPlane className="h-[9px] w-[9px]" /></span></TaskButton>
          <TaskButton label="Explorer"><G className="h-4 w-4"><path d="M0 2h6l2 2h8v11H0z" fill="#f9cf5a" /><path d="M0 2h6l2 2H0z" fill="#e2a32c" /><path d="M3 10h10l1 5H2z" fill="#1f7ac4" /></G></TaskButton>
          <TaskButton label="Chrome" run="idle">
            <svg viewBox="0 0 16 16" className="h-4 w-4">
              <path d="M8 8L1.070 4A8 8 0 0 1 14.930 4z" fill="#e94235" />
              <path d="M8 8L14.930 4A8 8 0 0 1 8 16z" fill="#fbbc05" />
              <path d="M8 8v8A8 8 0 0 1 1.070 4z" fill="#33a852" />
              <path d="M8 4.300h7.100L8 8z" fill="#fbbc05" />
              <circle cx="8" cy="8" r="3.800" fill="#fff" />
              <circle cx="8" cy="8" r="2.900" fill="#4285f4" />
            </svg>
          </TaskButton>
          <TaskButton label="Spotify"><FaSpotify className="h-[15px] w-[15px] text-[#1ed760]" /></TaskButton>
          <TaskButton label="Discord" run="active">
            <span className="flex h-4 w-4 items-center justify-center rounded-full bg-[#5865f2]"><FaDiscord className="h-[10px] w-[10px]" /></span>
            <span className="absolute top-[3px] right-[3px] h-2 w-2 rounded-full border-2 border-[#e5504f] bg-white" />
          </TaskButton>
          <TaskButton label="FL Studio" run="idle">
            <svg viewBox="0 0 16 16" className="h-4 w-4">
              <circle cx="8" cy="8" r="7.500" fill="#35383a" stroke="#66696b" />
              <path d="M5 7q3-3 6 0-.5 4-3 7-2.500-3-3-7z" fill="#f5842a" />
              <path d="M6 6V2l2 2 2-2v4z" fill="#56b43c" />
            </svg>
          </TaskButton>
          <TaskButton label="Substance Painter"><span className="flex h-[14px] w-[14px] items-center justify-center bg-[#15280b] text-[9px] font-bold text-[#a8e23c]">Pt</span></TaskButton>
          <TaskButton label="Photoshop"><span className="flex h-[14px] w-[14px] items-center justify-center border border-[#31a8e0] bg-[#0b2030] text-[8px] font-bold text-[#38b4f0]">Ps</span></TaskButton>
          <TaskButton label="Riot Client"><span className="flex h-4 w-4 items-center justify-center rounded-full bg-[#e01f3d]"><FaFistRaised className="h-[9px] w-[9px] -scale-x-100" /></span></TaskButton>
          <TaskButton label="Epic Games">
            <span className="flex h-[15px] w-[14px] flex-col items-center rounded-b-md bg-[#090909] text-[5px] leading-[9px] font-bold">EPIC<span className="h-px w-2 bg-[#bbb]" /></span>
          </TaskButton>
          <TaskButton label="Steam"><FaSteam className="h-[15px] w-[15px] rounded-full bg-[#10335f] text-[#e8eef5]" /></TaskButton>
          <TaskButton label="Cloudflare"><SiCloudflare className="h-4 w-4 text-[#f38020]" /></TaskButton>
        </div>
      </div>
      <div className="absolute inset-y-0 right-3 flex items-center pb-px text-[8px] text-[#e4e4e4]">
        <button aria-label="Hidden icons"><ChevronUp className="h-[10px] w-[10px]" /></button>
        <Mic className="ml-[12px] h-[11px] w-[11px] text-[#a7a7a7]" />
        <span className="ml-[12px]">ENG</span>
        <Monitor className="ml-[12px] h-[11px] w-[11px]" />
        <Volume2 className="ml-[5px] h-3 w-3" />
        <div className="ml-[8px] text-right leading-[11px]">18:02<br />09.01.2026</div>
        <G className="ml-[6px] h-[10px] w-[10px]" d="M1 12l2-3V5q1-4 5-4h3v2q-3 3 0 7l1 2zM6 13h4v2H6z" />
      </div>
      <div className="absolute right-1 bottom-0 flex flex-col gap-[3px] pb-[3px]">
        <span className="flex h-4 w-4 items-center justify-center bg-[#0b0b0b]"><G className="h-[10px] w-[10px]" d="M5.500 0h5v9h-5z"><S d="M3 7c0 6 10 6 10 0M8 11v4" w={1.6} /></G></span>
        <span className="flex h-4 w-4 items-center justify-center bg-[#0b0b0b]"><G className="h-[11px] w-[11px]"><S d="M2 9a6 6 0 1 1 11 3M5 14h5" w={1.8} /><circle cx="8" cy="8" r="2" /></G></span>
      </div>
    </footer>
  );
}

export default function App() {
  return (
    <div className="flex h-screen flex-col overflow-hidden bg-[#22272a] font-['Roboto_Condensed',Roboto,sans-serif]">
      <Header />
      <TitleBar />
      <div className="flex min-h-0 flex-1">
        <div className="w-[5px] shrink-0 bg-[#1d2224]" />
        <Picker />
        <Arrangement />
        <div className="ml-[2px] flex w-[13px] shrink-0 flex-col bg-[#1e2326]">
          <div className="flex h-[13px] items-center justify-center bg-[#262b2f]"><span className="h-[3px] w-[3px] rounded-full bg-black" /></div>
          <button aria-label="Scroll up" className="flex h-[14px] items-center justify-center bg-[#2e3437] text-[#14191b]"><ChevronUp className="h-2 w-2" strokeWidth={3} /></button>
          <div className="h-[23px] border-y border-[#16191b] bg-[#31373a]" />
          <div className="mt-auto h-[14px] bg-[#2e3437]" />
        </div>
      </div>
      <Taskbar />
    </div>
  );
}
